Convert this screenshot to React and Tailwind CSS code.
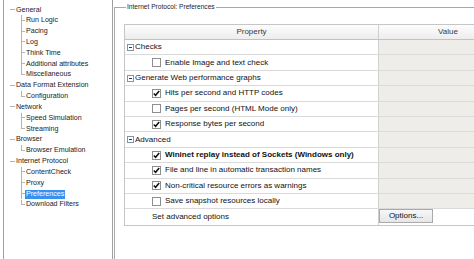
import React from 'react'

const tree = [
  { label: 'General', children: ['Run Logic', 'Pacing', 'Log', 'Think Time', 'Additional attributes', 'Miscellaneous'] },
  { label: 'Data Format Extension', children: ['Configuration'] },
  { label: 'Network', children: ['Speed Simulation', 'Streaming'] },
  { label: 'Browser', children: ['Browser Emulation'] },
  { label: 'Internet Protocol', children: ['ContentCheck', 'Proxy', 'Preferences', 'Download Filters'] },
]

const rows = [
  { type: 'cat', label: 'Checks' },
  { type: 'check', label: 'Enable Image and text check', checked: false },
  { type: 'cat', label: 'Generate Web performance graphs' },
  { type: 'check', label: 'Hits per second and HTTP codes', checked: true },
  { type: 'check', label: 'Pages per second (HTML Mode only)', checked: false },
  { type: 'check', label: 'Response bytes per second', checked: true },
  { type: 'cat', label: 'Advanced' },
  { type: 'check', label: 'Wininet replay instead of Sockets (Windows only)', checked: true, bold: true },
  { type: 'check', label: 'File and line in automatic transaction names', checked: true },
  { type: 'check', label: 'Non-critical resource errors as warnings', checked: true },
  { type: 'check', label: 'Save snapshot resources locally', checked: false },
  { type: 'button', label: 'Set advanced options' },
]

function TreeRow({ label, child, last, selected }) {
  return (
    <div className={`flex items-stretch h-[10.83px] ${child ? 'ml-[11px]' : ''}`}>
      <div className={`flex flex-col shrink-0 ${child ? 'w-[4px]' : 'w-[5px]'}`}>
        <div className={`h-1/2 border-b border-[#b4b4b4] ${child ? 'border-l' : ''}`} />
        <div className={`h-1/2 ${child && !last ? 'border-l border-[#b4b4b4]' : ''}`} />
      </div>
      <div className="flex items-center">
        <span
          className={`px-[1px] leading-[9px] whitespace-nowrap ${
            selected ? 'bg-[#3592f0] text-white' : 'text-[#222]'
          }`}
        >
          {label}
        </span>
      </div>
    </div>
  )
}

function CheckBox({ checked }) {
  return (
    <div className="w-[9px] h-[9px] border border-[#8e8e8e] bg-white flex items-center justify-center shrink-0">
      {checked && (
        <svg width="7" height="7" viewBox="0 0 7 7">
          <path d="M0.8 3.4 L2.6 5.3 L6.2 1" fill="none" stroke="#111" strokeWidth="1.5" />
        </svg>
      )}
    </div>
  )
}

function MinusBox() {
  return (
    <div className="w-[7px] h-[7px] border border-[#7f93ad] bg-white flex items-center justify-center shrink-0">
      <div className="w-[3px] h-px bg-[#2a3a55]" />
    </div>
  )
}

export default function App() {
  return (
    <div className="w-[474px] h-[259px] bg-white overflow-hidden flex font-['Liberation_Sans',Arial,sans-serif]">
      <div className="pl-[3px] shrink-0">
        <div className="w-[110px] h-[259px] border-l border-r border-[#a0a0a0] pl-[6px] pt-[4.6px] text-[7.1px]">
          {tree.map((g) => (
            <div key={g.label}>
              <TreeRow label={g.label} />
              {g.children.map((c, i) => (
                <TreeRow
                  key={c}
                  label={c}
                  child
                  last={i === g.children.length - 1}
                  selected={c === 'Preferences'}
                />
              ))}
            </div>
          ))}
        </div>
      </div>

      <fieldset className="ml-[1px] mt-[3px] flex-1 min-w-0 border-t border-l border-[#a8a8a8] h-[300px] pl-[9px]">
        <legend className="ml-[2px] px-[1px] text-[6.6px] leading-[8px] text-[#222] whitespace-nowrap">
          Internet Protocol: Preferences
        </legend>
        <div className="mt-[13px] w-[400px] border-t border-l border-b border-[#c6c6c6] text-[8px] text-[#111]">
          <div className="flex h-[15px] border-b border-[#c2c2c2] bg-gradient-to-b from-[#fdfdfd] to-[#ededed] text-[#3a3a3a]">
            <div className="w-[254px] flex items-center justify-center border-r border-[#cfcfcf]">Property</div>
            <div className="w-[138px] flex items-center justify-center">Value</div>
          </div>
          {rows.map((r, i) => (
            <div key={i} className={`flex h-[15.42px] ${i < rows.length - 1 ? 'border-b border-[#dadada]' : ''}`}>
              <div className="w-[254px] flex items-center border-r border-[#cfcfcf] whitespace-nowrap overflow-hidden">
                {r.type === 'cat' && (
                  <>
                    <div className="ml-[2px]"><MinusBox /></div>
                    <span className="ml-[1px]">{r.label}</span>
                  </>
                )}
                {r.type === 'check' && (
                  <>
                    <div className="ml-[27px]"><CheckBox checked={r.checked} /></div>
                    <span className={`ml-[4px] ${r.bold ? 'font-bold' : ''}`}>{r.label}</span>
                  </>
                )}
                {r.type === 'button' && <span className="ml-[27px]">{r.label}</span>}
              </div>
              {r.type === 'button' ? (
                <div className="w-[138px] flex items-stretch bg-white">
                  <button className="w-[54px] h-[14px] border border-[#a9a9a9] bg-gradient-to-b from-[#f7f7f7] to-[#e6e6e6] text-[8px] text-[#111] leading-none flex items-center justify-center">
                    Options...
                  </button>
                </div>
              ) : (
                <div className="w-[138px] bg-[#eeede9]" />
              )}
            </div>
          ))}
        </div>
      </fieldset>
    </div>
  )
}
